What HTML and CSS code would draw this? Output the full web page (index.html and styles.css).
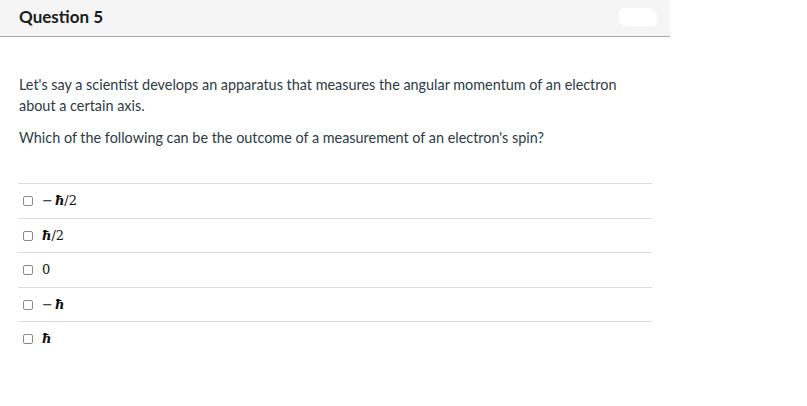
FILE: index.html
```html
<!DOCTYPE html>
<html>
<head>
<meta charset="utf-8">
<link rel="stylesheet" href="styles.css">
</head>
<body>
<div class="question">
  <div class="header">
    <h2 class="title">Question 5</h2>
    <span class="blob"></span>
  </div>
  <div class="content">
    <p class="text">Let's say a scientist develops an apparatus that measures the angular momentum of an electron about a certain axis.</p>
    <p class="text">Which of the following can be the outcome of a measurement of an electron's spin?</p>
    <div class="answers">
      <label class="answer"><span class="box"></span><span class="math"><span class="minus">−</span><i>ħ</i>/2</span></label>
      <label class="answer"><span class="box"></span><span class="math"><i>ħ</i>/2</span></label>
      <label class="answer"><span class="box"></span><span class="math">0</span></label>
      <label class="answer"><span class="box"></span><span class="math"><span class="minus">−</span><i>ħ</i></span></label>
      <label class="answer last"><span class="box"></span><span class="math"><i>ħ</i></span></label>
    </div>
  </div>
</div>
</body>
</html>
```
FILE: styles.css
```css
html, body {
  margin: 0;
  padding: 0;
  background: #ffffff;
}
.question {
  width: 670px;
  font-family: Lato, "Liberation Sans", sans-serif;
  color: #2d3b45;
}
.header {
  height: 37px;
  background: #f5f5f5;
  border-bottom: 1px solid #a8a8a8;
  display: flex;
  align-items: center;
  justify-content: space-between;
  padding: 0 13px 0 19px;
  box-sizing: border-box;
}
.title {
  margin: 0;
  font-size: 17px;
  font-weight: 700;
  color: #1b1b1b;
  position: relative;
  top: -2px;
}
.blob {
  width: 38px;
  height: 18px;
  background: #ffffff;
  border-radius: 5px 9px 3px 7px;
  position: relative;
  top: -1px;
}
.content {
  padding: 37px 18px 0 19px;
}
.text {
  margin: 0 0 11px 0;
  font-size: 14.4px;
  line-height: 21px;
  width: 615px;
}
.answers {
  margin-top: 35px;
  width: 634px;
  margin-left: -1px;
}
.answer {
  display: flex;
  align-items: center;
  height: 34.5px;
  border-top: 1px solid #dcdcdc;
  padding-left: 5px;
  box-sizing: border-box;
}
.box {
  width: 8px;
  height: 8px;
  border: 1px solid #8a8a8a;
  border-radius: 2px;
  margin-right: 9px;
  margin-top: 1px;
}
.math {
  font-family: "DejaVu Serif", "Liberation Serif", serif;
  font-size: 13px;
  color: #111;
}
.minus {
  margin-right: 2px;
}
.math i {
  font-weight: 700;
}
```
